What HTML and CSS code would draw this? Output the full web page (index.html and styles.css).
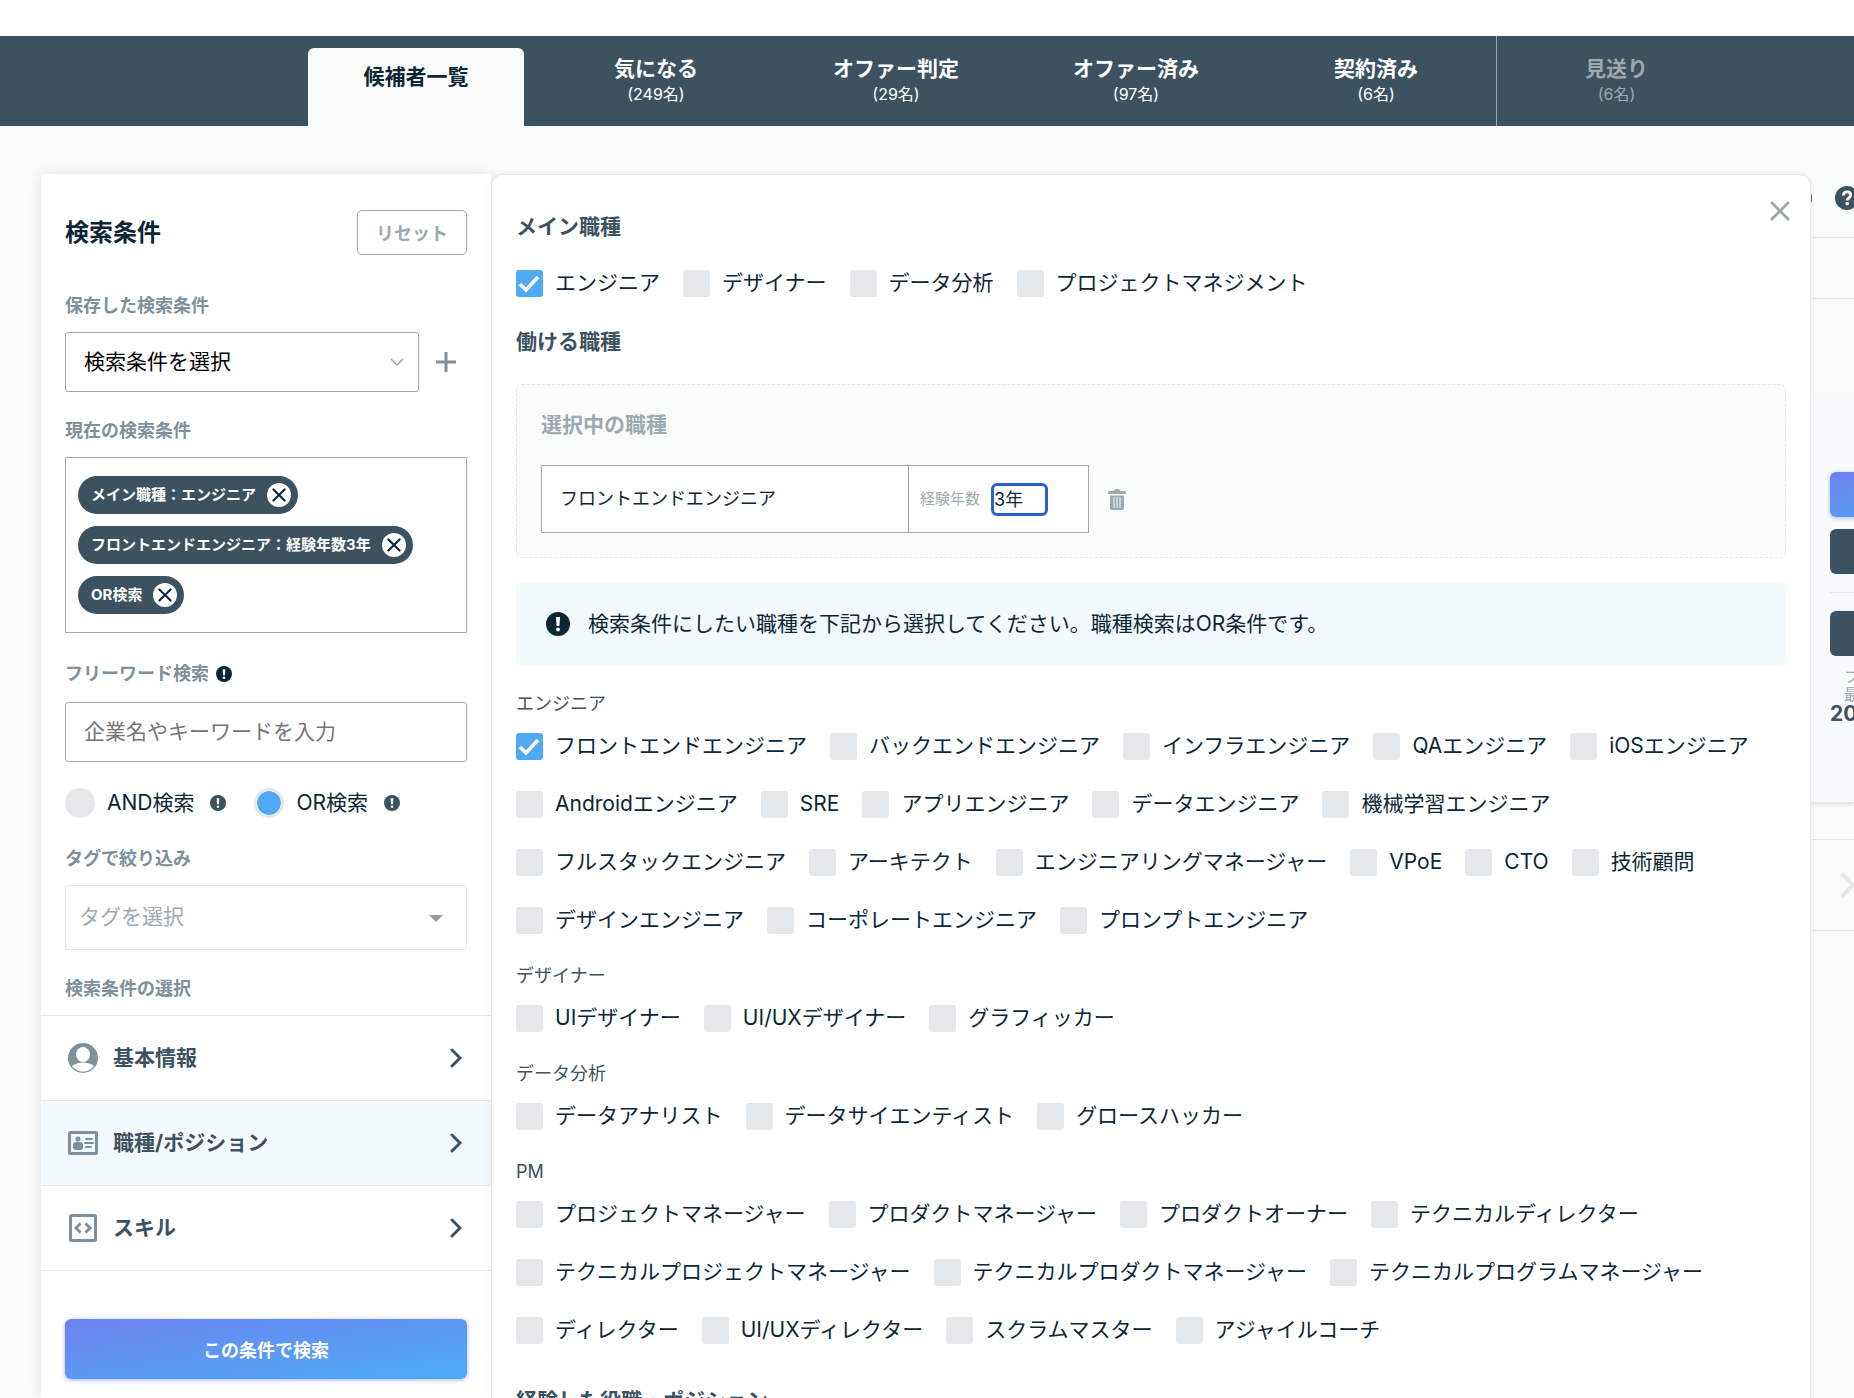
FILE: index.html
```
<!DOCTYPE html>
<html lang="ja">

<head>
    <meta charset="UTF-8" />
    <title>候補者一覧</title>
    <link rel="stylesheet" href="styles.css">
</head>

<body>

    <!-- アイコン定義 -->
    <svg class="icon-defs" aria-hidden="true">
        <symbol id="icon-info" viewBox="0 0 24 24">
            <circle cx="12" cy="12" r="12" fill="currentColor" />
            <path d="M10 5h4l-.6 9h-2.800z" fill="#fff" />
            <circle cx="12" cy="17.500" r="1.900" fill="#fff" />
        </symbol>
        <symbol id="icon-cross" viewBox="0 0 20 20">
            <path d="M2 2l16 16M18 2L2 18" fill="none" stroke="currentColor" stroke-width="3" stroke-linecap="round" />
        </symbol>
        <symbol id="icon-next" viewBox="0 0 12 20">
            <path d="M2 2l8 8-8 8" fill="none" stroke="currentColor" stroke-width="3" stroke-linecap="round" />
        </symbol>
        <symbol id="icon-help" viewBox="0 0 24 24">
            <circle cx="12" cy="12" r="12" fill="currentColor" />
            <path d="M8.400 9.400c0-2.200 1.500-3.600 3.700-3.600s3.700 1.300 3.700 3.200c0 2.600-3.500 2.700-3.500 5.400" fill="none" stroke="#fff" stroke-width="2.800" />
            <circle cx="12.200" cy="17.600" r="1.800" fill="#fff" />
        </symbol>
    </svg>

    <nav class="tabs">
        <a class="tab tab-active" href="#"><span class="tab-name">候補者一覧</span></a>
        <a class="tab" href="#"><span class="tab-name">気になる</span><span class="tab-count">(249名)</span></a>
        <a class="tab" href="#"><span class="tab-name">オファー判定</span><span class="tab-count">(29名)</span></a>
        <a class="tab" href="#"><span class="tab-name">オファー済み</span><span class="tab-count">(97名)</span></a>
        <a class="tab" href="#"><span class="tab-name">契約済み</span><span class="tab-count">(6名)</span></a>
        <a class="tab tab-rejected" href="#"><span class="tab-name">見送り</span><span class="tab-count">(6名)</span></a>
    </nav>

    <main class="content">

        <!-- 検索条件サイドバー -->
        <aside class="sidebar">
            <div class="sidebar-body">
                <div class="sidebar-header">
                    <h1>検索条件</h1>
                    <button class="reset-button" type="button">リセット</button>
                </div>

                <div class="field">
                    <label class="field-label" for="saved">保存した検索条件</label>
                    <div class="saved-row">
                        <div class="select-box">
                            <select id="saved" class="text-control">
                                <option>検索条件を選択</option>
                            </select>
                            <svg class="select-arrow" viewBox="0 0 14 8"><path d="M1 1l6 6 6-6" fill="none" stroke="#9ca9af" stroke-width="1.600" /></svg>
                        </div>
                        <button class="add-button" type="button" aria-label="追加">
                            <svg viewBox="0 0 20 20"><path d="M10 0v20M0 10h20" stroke="currentColor" stroke-width="3" /></svg>
                        </button>
                    </div>
                </div>

                <div class="field">
                    <h2 class="field-label">現在の検索条件</h2>
                    <div class="chips">
                        <span class="chip">メイン職種：エンジニア<button type="button" aria-label="削除"><svg><use href="#icon-cross" /></svg></button></span>
                        <span class="chip">フロントエンドエンジニア：経験年数3年<button type="button" aria-label="削除"><svg><use href="#icon-cross" /></svg></button></span>
                        <span class="chip">OR検索<button type="button" aria-label="削除"><svg><use href="#icon-cross" /></svg></button></span>
                    </div>
                </div>

                <div class="field">
                    <label class="field-label label-with-icon" for="keyword">フリーワード検索<svg class="info-small info-dark"><use href="#icon-info" /></svg></label>
                    <input id="keyword" class="text-control" type="text" placeholder="企業名やキーワードを入力">
                </div>

                <div class="field radios">
                    <label><input type="radio" name="mode">AND検索<svg class="info-small"><use href="#icon-info" /></svg></label>
                    <label><input type="radio" name="mode" checked>OR検索<svg class="info-small"><use href="#icon-info" /></svg></label>
                </div>

                <div class="field">
                    <label class="field-label" for="tag">タグで絞り込み</label>
                    <div class="select-box">
                        <select id="tag" class="text-control tag-select">
                            <option>タグを選択</option>
                        </select>
                        <svg class="tag-arrow" viewBox="0 0 14 7"><path d="M0 0h14l-7 7z" fill="#999" /></svg>
                    </div>
                </div>

                <h2 class="field-label">検索条件の選択</h2>
            </div>

            <div class="categories">
                <button class="category" type="button">
                    <svg class="category-icon" viewBox="0 0 30 30">
                        <circle cx="15" cy="15" r="15" fill="currentColor" />
                        <ellipse cx="15" cy="11.500" rx="7" ry="7.500" fill="#fff" />
                        <path d="M4 23.300c5.500-5 16.500-5 22 0a14 14 0 0 1-22 0z" fill="#fff" />
                    </svg>
                    <span>基本情報</span>
                    <svg class="category-next"><use href="#icon-next" /></svg>
                </button>
                <button class="category category-active" type="button">
                    <svg class="category-icon" viewBox="0 0 30 30">
                        <rect x="1.500" y="4.500" width="27" height="21" rx="1" fill="none" stroke="currentColor" stroke-width="3" />
                        <circle cx="10" cy="11" r="2.600" fill="currentColor" />
                        <rect x="5" y="14" width="10" height="8" rx="3" fill="currentColor" />
                        <path d="M18 11h6M17 15h8M18 19h5" stroke="currentColor" stroke-width="2" stroke-linecap="round" />
                    </svg>
                    <span>職種/ポジション</span>
                    <svg class="category-next"><use href="#icon-next" /></svg>
                </button>
                <button class="category" type="button">
                    <svg class="category-icon" viewBox="0 0 30 30">
                        <rect x="2.500" y="2.500" width="25" height="25" rx="1" fill="none" stroke="currentColor" stroke-width="3" />
                        <path d="M12.500 10.500L8 15l4.500 4.500M17.500 10.500L22 15l-4.500 4.500" fill="none" stroke="currentColor" stroke-width="3" />
                    </svg>
                    <span>スキル</span>
                    <svg class="category-next"><use href="#icon-next" /></svg>
                </button>
            </div>

            <div class="sidebar-footer">
                <button class="search-button" type="button">この条件で検索</button>
            </div>
        </aside>

        <!-- 職種/ポジション選択パネル -->
        <section class="panel">
            <button class="close-button" type="button" aria-label="閉じる"><svg><use href="#icon-cross" /></svg></button>

            <h2 class="panel-title">メイン職種</h2>
            <div class="checks">
                <label><input type="checkbox" checked>エンジニア</label>
                <label><input type="checkbox">デザイナー</label>
                <label><input type="checkbox">データ分析</label>
                <label><input type="checkbox">プロジェクトマネジメント</label>
            </div>

            <h2 class="panel-title jobs-title">働ける職種</h2>
            <div class="selected-jobs">
                <h3>選択中の職種</h3>
                <div class="job-row">
                    <div class="job-box">
                        <span class="job-name">フロントエンドエンジニア</span>
                        <div class="job-years">
                            <label for="years">経験年数</label>
                            <select id="years">
                                <option>3年</option>
                            </select>
                        </div>
                    </div>
                    <button class="trash-button" type="button" aria-label="削除">
                        <svg viewBox="0 0 18 21">
                            <path d="M0 3.500q0-1.500 1.500-1.500H6q0-2 3-2t3 2h4.500q1.500 0 1.500 1.500V5H0zM2 6.500h14V19q0 2-2 2H4q-2 0-2-2z" fill="currentColor" />
                            <path d="M6 8v11M9 8v11M12 8v11" stroke="#fafcfb" stroke-width="1" />
                        </svg>
                    </button>
                </div>
            </div>

            <p class="notice"><svg><use href="#icon-info" /></svg>検索条件にしたい職種を下記から選択してください。職種検索はOR条件です。</p>

            <div class="group">
                <h3>エンジニア</h3>
                <div class="checks">
                    <label><input type="checkbox" checked>フロントエンドエンジニア</label>
                    <label><input type="checkbox">バックエンドエンジニア</label>
                    <label><input type="checkbox">インフラエンジニア</label>
                    <label><input type="checkbox">QAエンジニア</label>
                    <label><input type="checkbox">iOSエンジニア</label>
                    <label><input type="checkbox">Androidエンジニア</label>
                    <label><input type="checkbox">SRE</label>
                    <label><input type="checkbox">アプリエンジニア</label>
                    <label><input type="checkbox">データエンジニア</label>
                    <label><input type="checkbox">機械学習エンジニア</label>
                    <label><input type="checkbox">フルスタックエンジニア</label>
                    <label><input type="checkbox">アーキテクト</label>
                    <label><input type="checkbox">エンジニアリングマネージャー</label>
                    <label><input type="checkbox">VPoE</label>
                    <label><input type="checkbox">CTO</label>
                    <label><input type="checkbox">技術顧問</label>
                    <label><input type="checkbox">デザインエンジニア</label>
                    <label><input type="checkbox">コーポレートエンジニア</label>
                    <label><input type="checkbox">プロンプトエンジニア</label>
                </div>
            </div>

            <div class="group">
                <h3>デザイナー</h3>
                <div class="checks">
                    <label><input type="checkbox">UIデザイナー</label>
                    <label><input type="checkbox">UI/UXデザイナー</label>
                    <label><input type="checkbox">グラフィッカー</label>
                </div>
            </div>

            <div class="group">
                <h3>データ分析</h3>
                <div class="checks">
                    <label><input type="checkbox">データアナリスト</label>
                    <label><input type="checkbox">データサイエンティスト</label>
                    <label><input type="checkbox">グロースハッカー</label>
                </div>
            </div>

            <div class="group">
                <h3>PM</h3>
                <div class="checks">
                    <label><input type="checkbox">プロジェクトマネージャー</label>
                    <label><input type="checkbox">プロダクトマネージャー</label>
                    <label><input type="checkbox">プロダクトオーナー</label>
                    <label><input type="checkbox">テクニカルディレクター</label>
                    <label><input type="checkbox">テクニカルプロジェクトマネージャー</label>
                    <label><input type="checkbox">テクニカルプロダクトマネージャー</label>
                    <label><input type="checkbox">テクニカルプログラムマネージャー</label>
                    <label><input type="checkbox">ディレクター</label>
                    <label><input type="checkbox">UI/UXディレクター</label>
                    <label><input type="checkbox">スクラムマスター</label>
                    <label><input type="checkbox">アジャイルコーチ</label>
                </div>
            </div>

            <h2 class="panel-title history-title">経験した役職・ポジション</h2>
        </section>

        <!-- パネルの後ろの候補者リスト -->
        <section class="results">
            <div class="results-toolbar">
                <svg><use href="#icon-help" /></svg>
                <svg><use href="#icon-help" /></svg>
            </div>
            <div class="results-filter"></div>
            <div class="candidate">
                <button class="candidate-button candidate-primary" type="button" aria-label="オファー"></button>
                <button class="candidate-button" type="button" aria-label="気になる"></button>
                <hr>
                <button class="candidate-button" type="button" aria-label="見送り"></button>
                <p class="candidate-note">フ<br>最</p>
                <p class="candidate-date">20</p>
            </div>
            <div class="results-pager"><svg><use href="#icon-next" /></svg></div>
        </section>

    </main>

</body>

</html>
```

FILE: styles.css
```
* {
    box-sizing: border-box;
}

body {
    margin: 0;
    padding-top: 36px;
    height: 100vh;
    display: flex;
    flex-direction: column;
    overflow: hidden;
    font-family: Inter, "Noto Sans CJK JP", sans-serif;
    font-size: 21px;
    line-height: 34px;
    color: #0c2636;
    background-color: #fff;
}

h1, h2, h3, p {
    margin: 0;
}

button, input, select {
    font-family: inherit;
    color: inherit;
    margin: 0;
}

button {
    padding: 0;
    border: none;
    background: none;
    cursor: pointer;
}

svg {
    display: block;
    flex: none;
}

.icon-defs {
    position: absolute;
    width: 0;
    height: 0;
}

/* タブ */
.tabs {
    flex: none;
    display: flex;
    height: 90px;
    padding-left: 296px;
    background-color: #3c5260;
}

.tab {
    width: 240px;
    padding-top: 20px;
    display: flex;
    flex-direction: column;
    align-items: center;
    color: #fff;
    text-decoration: none;
}

.tab-name {
    font-weight: bold;
    line-height: 26px;
}

.tab-count {
    font-size: 16px;
    line-height: 24px;
}

.tab-active {
    width: 216px;
    margin: 12px 12px 0;
    padding-top: 16px;
    border-radius: 6px 6px 0 0;
    color: #0c2636;
    background-color: #fafcfb;
}

.tab-rejected {
    border-left: 1px solid #9ca9af;
    color: #9ca9af;
}

.content {
    flex: 1;
    min-height: 0;
    display: grid;
    grid-template-columns: 450px 1fr 43px;
    grid-template-rows: minmax(0, 1fr);
    padding: 48px 0 0 41px;
    background-color: #fafcfb;
}

/* サイドバー */
.sidebar {
    display: flex;
    flex-direction: column;
    min-height: 0;
    background-color: #fff;
    box-shadow: 0 0 12px rgba(12, 38, 54, 0.12);
}

.sidebar-body {
    padding: 36px 24px 0;
}

.sidebar-header {
    display: flex;
    justify-content: space-between;
    align-items: center;
    margin-bottom: 36px;
}

.sidebar-header h1 {
    font-size: 24px;
}

.reset-button {
    width: 110px;
    height: 45px;
    padding-bottom: 2px;
    border: 1px solid #9ca9af;
    border-radius: 5px;
    font-size: 18px;
    font-weight: bold;
    color: #9ca9af;
}

.field {
    margin-bottom: 24px;
}

.field-label {
    display: block;
    margin-bottom: 12px;
    font-size: 18px;
    line-height: 29px;
    font-weight: bold;
    color: #7d909c;
}

.label-with-icon {
    display: flex;
    align-items: center;
    gap: 7px;
    line-height: 33px;
}

.text-control {
    display: block;
    width: 100%;
    height: 60px;
    padding: 0 18px 2px;
    border: 1px solid #9ca9af;
    border-radius: 3px;
    font-size: 21px;
    background-color: #fff;
    appearance: none;
}

.text-control::placeholder {
    color: #757575;
}

.saved-row {
    display: flex;
    align-items: center;
}

.select-box {
    position: relative;
    flex: 1;
}

#saved {
    color: #000;
}

.select-arrow,
.tag-arrow {
    position: absolute;
    right: 15px;
    top: 26px;
    width: 14px;
    height: 8px;
}

.tag-arrow {
    right: 24px;
    top: 30px;
    height: 7px;
}

.add-button {
    width: 48px;
    padding-left: 17px;
    color: #7d909c;
}

.add-button svg {
    width: 20px;
    height: 20px;
}

.tag-select {
    height: 65px;
    padding: 0 13px 2px;
    border-color: #e4e8eb;
    color: #9ca9af;
}

.chips {
    display: flex;
    flex-direction: column;
    align-items: flex-start;
    gap: 12px;
    padding: 18px 12px;
    border: 1px solid #9ca9af;
}

.chip {
    display: flex;
    align-items: center;
    gap: 11px;
    height: 38px;
    padding: 0 7px 0 13px;
    border-radius: 19px;
    font-size: 15px;
    font-weight: bold;
    color: #fff;
    background-color: #3c5260;
}

.chip button {
    width: 24px;
    height: 24px;
    padding: 5px;
    border-radius: 50%;
    color: #0c2636;
    background-color: #fff;
}

.chip svg {
    width: 14px;
    height: 14px;
}

.info-small {
    width: 16px;
    height: 16px;
    color: #3c5260;
}

.info-dark {
    color: #0c2636;
}

.radios {
    display: flex;
    gap: 28px;
}

.radios label {
    display: flex;
    align-items: center;
}

.radios input {
    width: 30px;
    height: 30px;
    margin-right: 12px;
    border: 3px solid #e4e8eb;
    border-radius: 50%;
    background-color: #e4e8eb;
    appearance: none;
}

.radios input:checked {
    background-color: #4faaf5;
    background-clip: padding-box;
}

.radios svg {
    margin-left: 16px;
}

.categories {
    border-top: 1px solid #e4e8eb;
}

.category {
    display: flex;
    align-items: center;
    width: 100%;
    height: 85px;
    padding: 0 29px 0 27px;
    border-bottom: 1px solid #e4e8eb;
    font-size: 21px;
    font-weight: bold;
    text-align: left;
    color: #3c5260;
}

.category span {
    flex: 1;
    padding-bottom: 4px;
}

.category-active {
    background-color: #f3fafd;
}

.category-icon {
    width: 30px;
    height: 30px;
    margin-right: 15px;
    color: #7d909c;
}

.category-next {
    width: 12px;
    height: 20px;
}

.sidebar-footer {
    margin-top: auto;
    padding: 24px 24px 19px;
    background-color: #fff;
}

.search-button {
    display: block;
    width: 100%;
    height: 60px;
    border-radius: 6px;
    font-size: 18px;
    font-weight: bold;
    color: #fff;
    background: linear-gradient(to bottom right, #6c82f0, #4dadf6);
    box-shadow: 0 1px 4px rgba(80, 110, 240, 0.5);
}

/* 選択パネル */
.panel {
    position: relative;
    z-index: 1;
    min-width: 0;
    padding: 36px 24px 0;
    border: 1px solid #e4e8eb;
    border-bottom: none;
    border-radius: 12px 12px 0 0;
    background-color: #fff;
    box-shadow: 0 0 6px rgba(12, 38, 54, 0.08);
}

.close-button {
    position: absolute;
    top: 26px;
    right: 20px;
    color: #9ca9af;
}

.close-button svg {
    width: 20px;
    height: 20px;
}

.panel-title {
    font-size: 21px;
    line-height: 32px;
    color: #3c5260;
    margin-bottom: 23px;
}

.jobs-title {
    margin-top: 26px;
    margin-bottom: 26px;
}

.history-title {
    margin-top: 38px;
}

.checks {
    display: flex;
    flex-wrap: wrap;
    gap: 24px 23px;
}

.checks label {
    display: flex;
    align-items: center;
}

.checks input {
    width: 27px;
    height: 27px;
    margin-right: 12px;
    border-radius: 3px;
    background-color: #e4e8eb;
    appearance: none;
}

.checks input:checked {
    background: #4faaf5 url("data:image/svg+xml,%3Csvg xmlns='http://www.w3.org/2000/svg' viewBox='0 0 27 27'%3E%3Cpath d='M4 14l6 6L22 7' fill='none' stroke='%23fff' stroke-width='3.600'/%3E%3C/svg%3E");
}

.selected-jobs {
    padding: 24px;
    border: 1px dashed #e4e8eb;
    border-radius: 6px;
    background-color: #fafcfb;
}

.selected-jobs h3 {
    margin-bottom: 24px;
    font-size: 21px;
    line-height: 32px;
    color: #9ca9af;
}

.job-row {
    display: flex;
    align-items: center;
}

.job-box {
    display: flex;
    width: 548px;
    height: 68px;
    border: 1px solid #9ca9af;
    font-size: 18px;
    background-color: #fff;
}

.job-name {
    flex: 1;
    display: flex;
    align-items: center;
    padding-left: 18px;
}

.job-years {
    width: 180px;
    display: flex;
    align-items: center;
    gap: 11px;
    padding-left: 11px;
    border-left: 1px solid #9ca9af;
}

.job-years label {
    font-size: 15px;
    color: #9ca9af;
}

.job-years select {
    width: 57px;
    height: 33px;
    padding: 0;
    border: 3px solid #2860cc;
    border-radius: 6px;
    font-size: 18px;
    background-color: #fff;
    appearance: none;
}

.trash-button {
    margin-left: 19px;
    color: #9ca9af;
}

.trash-button svg {
    width: 18px;
    height: 21px;
}

.notice {
    display: flex;
    align-items: center;
    gap: 18px;
    height: 84px;
    margin: 24px 0;
    padding-left: 30px;
    border-radius: 6px;
    background-color: #f3fafd;
}

.notice svg {
    width: 24px;
    height: 24px;
}

.group {
    margin-bottom: 25px;
}

.group h3 {
    margin-bottom: 11px;
    font-size: 18px;
    line-height: 28px;
    font-weight: normal;
    color: #3c5260;
}

/* 候補者リスト */
.results {
    min-width: 0;
    overflow: hidden;
    color: #3c5260;
}

.results-toolbar {
    display: flex;
    align-items: center;
    gap: 23px;
    height: 64px;
    margin-left: -23px;
    padding-bottom: 16px;
    border-bottom: 1px solid #e4e8eb;
}

.results-toolbar svg {
    width: 24px;
    height: 24px;
}

.results-filter {
    height: 61px;
    margin-bottom: 95px;
    border-bottom: 1px solid #e4e8eb;
}

.candidate {
    height: 409px;
    padding: 78px 0 0 19px;
    border-bottom: 1px solid #e4e8eb;
    background-color: #f9fafc;
    box-shadow: 0 2px 4px rgba(12, 38, 54, 0.1);
}

.candidate-button {
    display: block;
    width: 180px;
    height: 45px;
    margin-bottom: 12px;
    border-radius: 6px;
    background-color: #3c5260;
}

.candidate-primary {
    background: linear-gradient(to bottom right, #6c82f0, #4dadf6);
    box-shadow: 0 1px 4px rgba(80, 110, 240, 0.5);
}

.candidate hr {
    margin: 18px 0;
    border: none;
    border-top: 1px solid #e4e8eb;
}

.candidate-note {
    padding-left: 14px;
    font-size: 15px;
    line-height: 18px;
    color: #9ca9af;
}

.candidate-date {
    font-weight: bold;
    line-height: 20px;
}

.results-pager {
    display: flex;
    align-items: center;
    height: 92px;
    margin-top: 36px;
    padding-left: 29px;
    border: 1px solid #e4e8eb;
    border-width: 1px 0;
    color: #e4e8eb;
}

.results-pager svg {
    width: 16px;
    height: 26px;
}
```
